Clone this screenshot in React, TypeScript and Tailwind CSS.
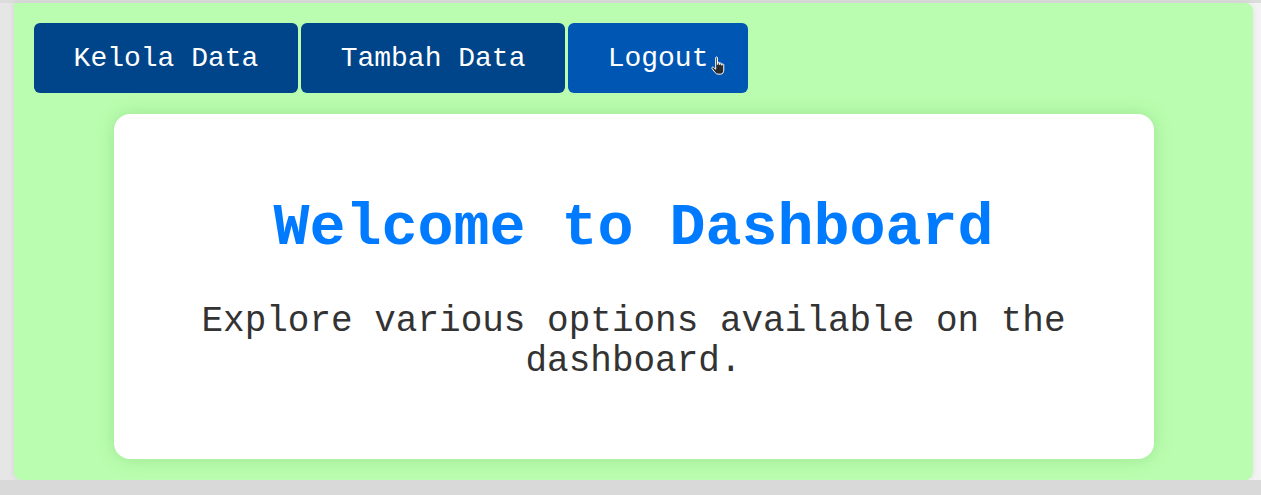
const mono = "font-['Liberation_Mono','Courier_New',monospace]";

function HandCursor() {
  return (
    <svg
      className="absolute left-[710px] top-[56px] pointer-events-none"
      width="18"
      height="21"
      viewBox="0 0 16 19"
    >
      <path
        d="M5 1.6C5 .6 6.6.6 6.6 1.6V7.6H7V6.3C7 5.4 8.5 5.4 8.5 6.3V7.8H8.9V6.9C8.9 6 10.4 6 10.4 6.9V8.3H10.8V7.8C10.8 7 12.3 7 12.3 7.8V12.6C12.3 14.8 11.3 16.4 9.6 16.4H7C6 16.4 5.3 15.9 4.6 15.1L1.7 11.4C1.1 10.6 2.1 9.6 2.9 10.2L5 12Z"
        fill="#2b2b2b"
        stroke="#ffffff"
        strokeWidth="0.9"
        strokeLinejoin="round"
      />
    </svg>
  );
}

function NavButton({ label, active }: { label: string; active?: boolean }) {
  return (
    <button
      className={
        active
          ? "rounded-md bg-[#0056b3] px-[39.6px] pt-[20px] pb-[18px] text-[28px] leading-[32px] text-white"
          : "rounded-md bg-[#004489] px-[39.6px] pt-[20px] pb-[18px] text-[28px] leading-[32px] text-white"
      }
    >
      {label}
    </button>
  );
}

export default function App() {
  return (
    <div className={`relative flex h-[495px] w-[1261px] flex-col overflow-hidden bg-[#eeeeee] ${mono}`}>
      <div className="h-[3px] bg-[#dcdcdc]" />
      <div className="flex bg-gradient-to-r from-[#e6e6e6] to-[#f3f3f3]">
        <div className="ml-[14px] mr-[8px] flex h-[477px] flex-1 flex-col rounded-b-lg rounded-tr-lg bg-[#bbfdb0] p-5 shadow-[0_0_6px_rgba(0,0,0,0.08)]">
          <nav className="flex gap-[3px]">
            <NavButton label="Kelola Data" />
            <NavButton label="Tambah Data" />
            <NavButton label="Logout" active />
          </nav>
          <div className="mx-auto mt-[21px] h-[345px] w-[1040px] rounded-2xl bg-white p-10 text-center shadow-[0_0_18px_rgba(60,160,50,0.25)]">
            <h1 className="my-[40px] text-[60px] font-bold leading-[normal] text-[#007bff]">
              Welcome to Dashboard
            </h1>
            <p className="mx-auto max-w-[900px] text-[36px] leading-[40px] text-[#333333]">
              Explore various options available on the dashboard.
            </p>
          </div>
        </div>
      </div>
      <div className="flex-1 bg-[#d9d9d9]" />
      <HandCursor />
    </div>
  );
}
